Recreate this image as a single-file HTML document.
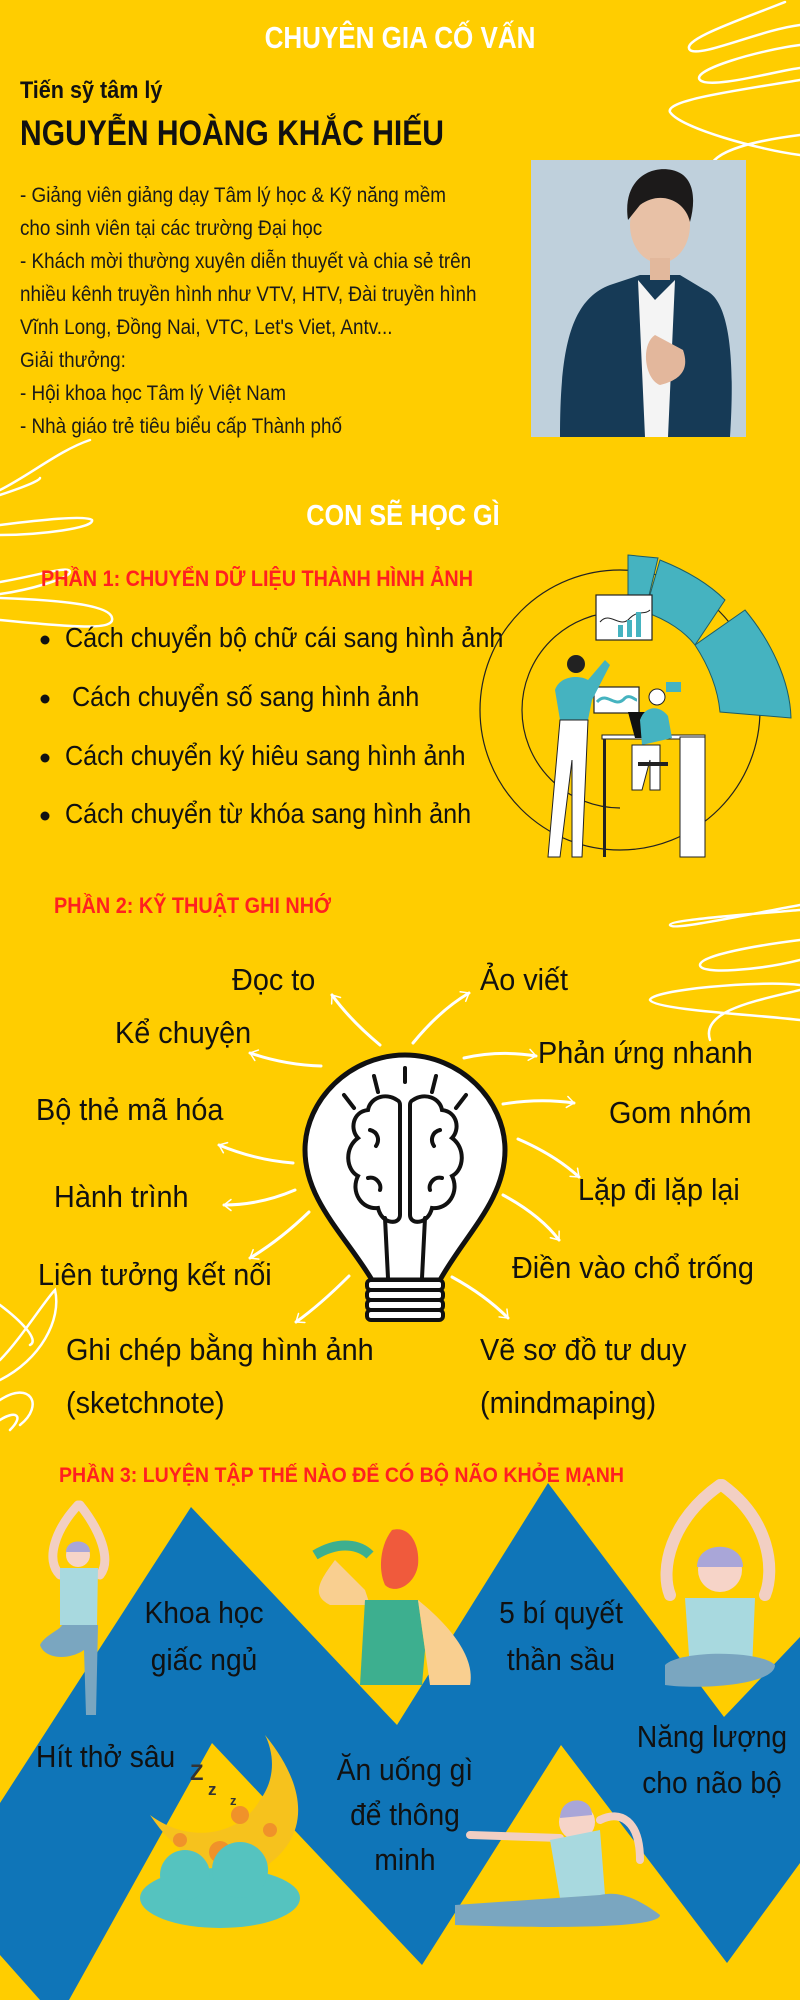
<!DOCTYPE html>
<html><head><meta charset="utf-8"><style>
html,body{margin:0;padding:0;background:#ffcd00;}
svg{display:block;}
text{font-family:"Liberation Sans Narrow","Liberation Sans","Noto Sans CJK SC",sans-serif;}
</style></head><body>
<svg width="800" height="2000" viewBox="0 0 800 2000" xmlns="http://www.w3.org/2000/svg">
<defs>
<marker id="ah" viewBox="0 0 10 10" refX="8" refY="5" markerWidth="5" markerHeight="5" orient="auto" markerUnits="userSpaceOnUse" style="overflow:visible">
<path d="M-6 -6 L8 5 L-6 16" fill="none" stroke="#fff" stroke-width="3" stroke-linecap="round" stroke-linejoin="round"/>
</marker>
</defs>
<rect width="800" height="2000" fill="#ffcd00"/>

<!-- scribbles -->
<g fill="none" stroke="#fff" stroke-width="2.5" stroke-linecap="round">
<path d="M785 2 C740 20 680 40 690 50 C700 58 760 30 800 25 M800 45 C760 50 690 70 700 80 C710 90 780 70 800 68 M800 80 C740 90 665 100 670 112 C680 128 760 150 800 155 M800 135 C760 140 710 150 710 170 C705 185 715 190 725 196"/>
<path d="M0 495 C30 485 40 480 40 478 M0 525 C40 520 85 515 92 520 C95 528 40 535 0 535 M0 582 C40 575 70 565 70 572 C70 578 30 590 0 594 M0 598 C60 600 110 605 112 618 C115 630 80 628 0 620"/>
<path d="M800 910 C740 915 670 920 670 925 C672 930 720 920 800 905 M800 940 C760 945 700 955 700 965 C700 975 760 970 800 960 M800 985 C760 980 650 990 650 1000 C655 1010 760 1015 800 1020 M800 990 C760 1000 700 1010 710 1040"/>
<path d="M0 1305 C20 1320 40 1340 30 1345 M0 1360 C20 1340 45 1300 55 1290 C62 1320 40 1360 0 1380 M0 1400 C30 1380 45 1405 20 1425 M0 1420 C15 1410 25 1415 10 1430"/>
<path d="M0 490 C30 475 60 450 90 440"/>
</g>

<!-- header -->
<g transform="scale(0.84,1)"><text x="476.2" y="48" text-anchor="middle" font-size="31" font-weight="bold" fill="#fff">CHUYÊN GIA CỐ VẤN</text></g>
<g transform="scale(0.9,1)"><text x="22.2" y="98" font-size="24" font-weight="bold" fill="#111">Tiến sỹ tâm lý</text></g>
<text x="20" y="145" font-size="35" font-weight="bold" fill="#111" textLength="424" lengthAdjust="spacingAndGlyphs">NGUYỄN HOÀNG KHẮC HIẾU</text>
<g font-size="21" fill="#1a1a1a" transform="scale(0.9,1)">
<text x="22.2" y="202">- Giảng viên giảng dạy Tâm lý học &amp; Kỹ năng mềm</text>
<text x="22.2" y="235">cho sinh viên tại các trường Đại học</text>
<text x="22.2" y="268">- Khách mời thường xuyên diễn thuyết và chia sẻ trên</text>
<text x="22.2" y="301">nhiều kênh truyền hình như VTV, HTV, Đài truyền hình</text>
<text x="22.2" y="334">Vĩnh Long, Đồng Nai, VTC, Let's Viet, Antv...</text>
<text x="22.2" y="367">Giải thưởng:</text>
<text x="22.2" y="400">- Hội khoa học Tâm lý Việt Nam</text>
<text x="22.2" y="433">- Nhà giáo trẻ tiêu biểu cấp Thành phố</text>
</g>
<!-- photo -->
<rect x="531" y="160" width="215" height="277" fill="#bfd0dc"/>
<path d="M560 437 C560 350 570 300 610 285 L640 275 L680 275 L705 290 C730 300 735 360 730 437 Z" fill="#163a56"/>
<path d="M638 280 L655 300 L675 280 L668 437 L645 437 Z" fill="#f4f4f4"/>
<path d="M655 335 C640 345 645 380 660 385 C680 380 690 370 683 350 Z" fill="#e3b79c"/>
<ellipse cx="660" cy="225" rx="30" ry="38" fill="#e8c1a6"/>
<path d="M628 220 C622 180 650 165 672 170 C695 175 696 200 690 222 C685 200 660 190 640 205 Z" fill="#1c1a1a"/>
<rect x="650" y="258" width="20" height="22" fill="#e2b89c"/>

<!-- section 1 -->
<g transform="scale(0.87,1)"><text x="463.2" y="525" text-anchor="middle" font-size="29" font-weight="bold" fill="#fff">CON SẼ HỌC GÌ</text></g>
<text x="41" y="586" font-size="22" font-weight="bold" fill="#ff2020" textLength="432" lengthAdjust="spacingAndGlyphs">PHẦN 1: CHUYỂN DỮ LIỆU THÀNH HÌNH ẢNH</text>
<g fill="#111">
<circle cx="45" cy="640" r="4.5"/><circle cx="45" cy="699" r="4.5"/><circle cx="45" cy="758" r="4.5"/><circle cx="45" cy="816" r="4.5"/>
</g>
<g fill="#111" font-size="28" transform="scale(0.9,1)">
<text x="72.2" y="647">Cách chuyển bộ chữ cái sang hình ảnh</text>
<text x="80" y="706">Cách chuyển số sang hình ảnh</text>
<text x="72.2" y="765">Cách chuyển ký hiêu sang hình ảnh</text>
<text x="72.2" y="823">Cách chuyển từ khóa sang hình ảnh</text>
</g>
<circle cx="620" cy="710" r="140" fill="none" stroke="#222" stroke-width="1.2"/>
<path d="M620 612 A98 98 0 0 0 620 808" fill="none" stroke="#222" stroke-width="1.2"/>
<g fill="#45b3c0" stroke="#1d5d66" stroke-width="1">
<path d="M628 555 L658 558 L645 612 L628 612 Z"/>
<path d="M660 560 C690 572 710 585 725 600 L695 645 C685 632 668 620 645 612 Z"/>
<path d="M745 610 C770 640 790 680 791 718 L720 712 C718 690 710 668 695 645 Z"/>
</g>
<!-- people illustration -->
<rect x="596" y="595" width="56" height="45" fill="#fff" stroke="#222" stroke-width="1.2"/>
<path d="M600 622 C610 610 620 630 630 618 C638 610 645 615 650 610" fill="none" stroke="#222"/>
<rect x="618" y="625" width="5" height="12" fill="#45b3c0"/><rect x="627" y="620" width="5" height="17" fill="#45b3c0"/><rect x="636" y="612" width="5" height="25" fill="#45b3c0"/>
<rect x="594" y="687" width="45" height="26" fill="#fff" stroke="#222" stroke-width="1.2"/>
<path d="M597 702 C607 690 615 710 625 698 C630 694 635 700 637 700" fill="none" stroke="#45b3c0" stroke-width="3"/>
<circle cx="576" cy="664" r="9" fill="#222"/>
<path d="M555 690 C560 675 580 675 588 680 L605 660 L610 665 L592 700 L588 720 L560 720 Z" fill="#45b3c0"/>
<path d="M560 720 L588 720 L582 857 L572 857 L572 760 L560 857 L548 857 Z" fill="#fff" stroke="#222" stroke-width="1"/>
<rect x="602" y="735" width="103" height="4" fill="#fff" stroke="#222"/>
<rect x="680" y="737" width="25" height="120" fill="#fff" stroke="#222"/>
<rect x="603" y="739" width="3" height="118" fill="#222"/>
<path d="M628 712 L645 712 L652 738 L635 738 Z" fill="#111"/>
<circle cx="657" cy="697" r="8" fill="#fff" stroke="#222"/>
<path d="M640 720 C645 705 660 705 668 716 L672 738 L642 745 Z" fill="#45b3c0"/>
<path d="M632 745 L660 745 L660 790 L650 790 L650 760 L642 790 L632 790 Z" fill="#fff" stroke="#222"/>
<rect x="638" y="762" width="30" height="4" fill="#222"/>
<rect x="666" y="682" width="15" height="10" fill="#45b3c0"/>

<!-- section 2 -->
<text x="54" y="913" font-size="22" font-weight="bold" fill="#ff2020" textLength="277" lengthAdjust="spacingAndGlyphs">PHẦN 2: KỸ THUẬT GHI NHỚ</text>
<!-- bulb -->
<path d="M405 1055 C350 1055 305 1100 305 1150 C305 1200 345 1235 372 1280 L440 1280 C465 1235 505 1200 505 1150 C505 1100 460 1055 405 1055 Z" fill="#fff" stroke="#111" stroke-width="5"/>
<g fill="#fff" stroke="#111" stroke-width="4">
<rect x="367" y="1280" width="76" height="10" rx="4"/>
<rect x="367" y="1290" width="76" height="10" rx="4"/>
<rect x="367" y="1300" width="76" height="10" rx="4"/>
<rect x="367" y="1310" width="76" height="10" rx="4"/>
</g>
<g fill="none" stroke="#111" stroke-width="4" stroke-linecap="round">
<path d="M405 1068 L405 1082 M374 1076 L378 1092 M436 1076 L432 1092 M344 1095 L354 1108 M466 1095 L456 1108"/>
<path d="M397 1100 C385 1092 370 1098 368 1110 C352 1112 350 1130 358 1138 C344 1148 346 1170 358 1176 C350 1192 362 1210 378 1208 C382 1225 400 1225 400 1215 L400 1105 C400 1102 399 1101 397 1100 Z"/>
<path d="M413 1100 C425 1092 440 1098 442 1110 C458 1112 460 1130 452 1138 C466 1148 464 1170 452 1176 C460 1192 448 1210 432 1208 C428 1225 410 1225 410 1215 L410 1105 C410 1102 411 1101 413 1100 Z"/>
<path d="M385 1218 L388 1278 M425 1218 L422 1278"/>
<path d="M370 1130 C378 1132 380 1140 376 1146 M440 1130 C432 1132 430 1140 434 1146 M368 1178 C376 1176 382 1184 380 1190 M442 1178 C434 1176 428 1184 430 1190"/>
</g>
<!-- arrows -->
<g fill="none" stroke="#fff" stroke-width="3" stroke-linecap="round" marker-end="url(#ah)">
<path d="M380 1045 Q350 1020 332 995"/>
<path d="M413 1043 Q440 1010 469 993"/>
<path d="M321 1066 Q285 1065 250 1053"/>
<path d="M464 1058 Q500 1050 536 1056"/>
<path d="M503 1104 Q540 1098 574 1103"/>
<path d="M518 1139 Q555 1155 579 1177"/>
<path d="M503 1195 Q540 1215 559 1240"/>
<path d="M452 1277 Q485 1295 508 1318"/>
<path d="M349 1276 Q320 1305 296 1322"/>
<path d="M309 1212 Q280 1240 250 1258"/>
<path d="M295 1190 Q260 1205 224 1205"/>
<path d="M293 1163 Q255 1160 219 1145"/>
</g>
<g fill="#111" font-size="31" transform="scale(0.93,1)">
<text x="249.5" y="990">Đọc to</text>
<text x="516.1" y="990">Ảo viết</text>
<text x="123.7" y="1043">Kể chuyện</text>
<text x="578.5" y="1063">Phản ứng nhanh</text>
<text x="38.7" y="1120">Bộ thẻ mã hóa</text>
<text x="654.8" y="1123">Gom nhóm</text>
<text x="58.1" y="1207">Hành trình</text>
<text x="621.5" y="1200">Lặp đi lặp lại</text>
<text x="40.9" y="1285">Liên tưởng kết nối</text>
<text x="550.5" y="1278">Điền vào chổ trống</text>
<text x="71" y="1360">Ghi chép bằng hình ảnh</text>
<text x="71" y="1413">(sketchnote)</text>
<text x="516.1" y="1360">Vẽ sơ đồ tư duy</text>
<text x="516.1" y="1413">(mindmaping)</text>
</g>

<!-- section 3 -->
<polygon points="0,1803 191,1507 397,1725 548,1483 724,1717 800,1637 800,1863 727,1963 561,1745 422,1965 212,1743 69,2000 40,2000 0,1955" fill="#0f75b8"/>
<text x="59" y="1482" font-size="21" font-weight="bold" fill="#ff2020" textLength="565" lengthAdjust="spacingAndGlyphs">PHẦN 3: LUYỆN TẬP THẾ NÀO ĐỂ CÓ BỘ NÃO KHỎE MẠNH</text>

<!-- yoga person left -->
<path d="M78 1505 C55 1530 45 1560 60 1575 M80 1505 C100 1530 112 1560 100 1575" fill="none" stroke="#f2cfc3" stroke-width="9" stroke-linecap="round"/>
<circle cx="78" cy="1555" r="12" fill="#f6d4c8"/>
<path d="M66 1552 C66 1538 90 1538 90 1552 Z" fill="#a9a6d8"/>
<path d="M60 1568 L98 1568 L97 1625 L60 1625 Z" fill="#a8d9df"/>
<path d="M62 1625 L98 1625 L96 1715 L86 1715 L84 1650 C70 1660 45 1660 40 1645 C45 1635 60 1630 62 1625 Z" fill="#7aa6c0"/>
<!-- drinking man -->
<path d="M315 1555 C340 1540 360 1545 370 1555" stroke="#3daf8f" stroke-width="10" fill="none"/>
<path d="M392 1530 C410 1525 420 1545 418 1565 C415 1585 395 1595 385 1585 C378 1570 380 1545 392 1530 Z" fill="#f05a3c"/>
<path d="M335 1560 C320 1580 310 1595 330 1605 L370 1605 L365 1590 Z" fill="#f9cf90"/>
<path d="M365 1600 L418 1600 L425 1650 L422 1685 L360 1685 Z" fill="#3daf8f"/>
<path d="M418 1600 C455 1630 475 1660 470 1685 L430 1685 Z" fill="#f9cf90"/>
<!-- yoga sitting right -->
<path d="M720 1485 C670 1520 660 1570 670 1595 M722 1485 C770 1520 775 1570 765 1595" fill="none" stroke="#f2cfc3" stroke-width="12" stroke-linecap="round"/>
<circle cx="720" cy="1570" r="22" fill="#f6d4c8"/>
<path d="M697 1567 C697 1540 743 1540 743 1567 Z" fill="#a9a6d8"/>
<path d="M685 1598 L755 1598 L752 1670 L690 1670 Z" fill="#a8d9df"/>
<path d="M665 1665 C680 1650 760 1650 775 1665 C775 1685 700 1690 665 1685 Z" fill="#7aa6c0"/>
<!-- moon and cloud -->
<path d="M265 1735 C310 1790 310 1840 260 1870 C220 1880 180 1860 150 1815 C190 1845 240 1835 260 1800 C275 1780 275 1755 265 1735 Z" fill="#f6c21d"/>
<circle cx="240" cy="1815" r="9" fill="#f0922a"/><circle cx="220" cy="1852" r="11" fill="#f0922a"/><circle cx="180" cy="1840" r="7" fill="#f0922a"/><circle cx="270" cy="1830" r="7" fill="#f0922a"/>
<ellipse cx="220" cy="1898" rx="80" ry="30" fill="#55c3bf"/>
<circle cx="185" cy="1875" r="25" fill="#55c3bf"/><circle cx="240" cy="1870" r="28" fill="#55c3bf"/>
<text x="190" y="1780" font-size="22" fill="#333" font-weight="bold">Z</text><text x="208" y="1795" font-size="17" fill="#333" font-weight="bold">z</text><text x="230" y="1805" font-size="13" fill="#333" font-weight="bold">z</text>
<!-- stretching man -->
<circle cx="577" cy="1822" r="18" fill="#f6d4c8"/>
<path d="M560 1818 C560 1795 592 1795 592 1815 Z" fill="#a9a6d8"/>
<path d="M470 1835 L560 1838" stroke="#f2cfc3" stroke-width="8" stroke-linecap="round"/>
<path d="M550 1840 L600 1830 L605 1895 L560 1898 Z" fill="#a8d9df"/>
<path d="M455 1905 L600 1895 C620 1890 640 1900 660 1915 C660 1925 600 1930 455 1925 Z" fill="#7aa6c0"/>
<path d="M600 1820 C620 1810 640 1820 640 1860" stroke="#f2cfc3" stroke-width="8" fill="none" stroke-linecap="round"/>

<g fill="#111" font-size="31" text-anchor="middle" transform="scale(0.91,1)">
<text x="224.2" y="1623">Khoa học</text>
<text x="224.2" y="1670">giấc ngủ</text>
<text x="616.5" y="1623">5 bí quyết</text>
<text x="616.5" y="1670">thần sầu</text>
<text x="445" y="1780">Ăn uống gì</text>
<text x="445" y="1825">để thông</text>
<text x="445" y="1870">minh</text>
<text x="782.4" y="1747">Năng lượng</text>
<text x="782.4" y="1793">cho não bộ</text>
<text x="39.6" y="1767" text-anchor="start">Hít thở sâu</text>
</g>
</svg>
</body></html>
